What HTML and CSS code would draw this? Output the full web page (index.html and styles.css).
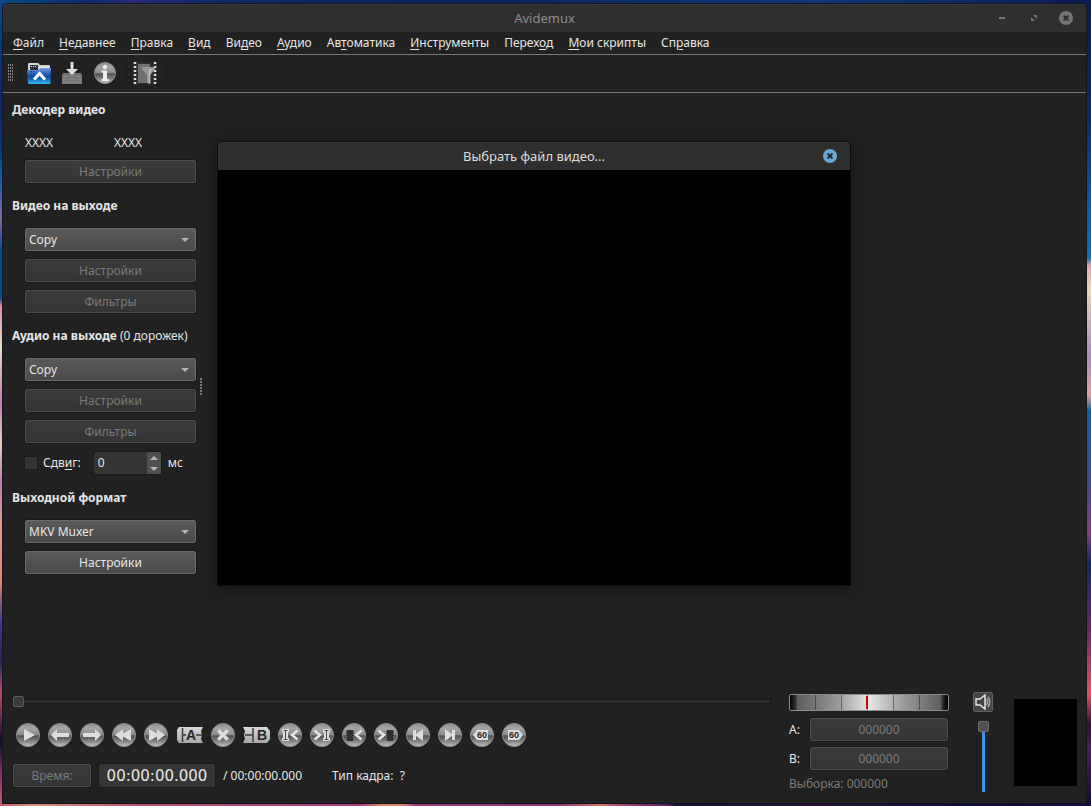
FILE: index.html
```html
<!DOCTYPE html>
<html lang="ru">
<head>
  <meta charset="UTF-8" />
  <title>Avidemux</title>
  <link rel="stylesheet" href="styles.css">
</head>
<body>
  <svg class="defs" width="0" height="0" aria-hidden="true">
    <defs>
      <linearGradient id="ball" x1="0" y1="0" x2="0" y2="1">
        <stop offset="0" stop-color="#8a8a8a" />
        <stop offset="0.2" stop-color="#a6a6a6" />
        <stop offset="0.48" stop-color="#8c8c8c" />
        <stop offset="0.54" stop-color="#505050" />
        <stop offset="0.78" stop-color="#858585" />
        <stop offset="1" stop-color="#c4c4c4" />
      </linearGradient>
      <linearGradient id="plate" x1="0" y1="0" x2="0" y2="1">
        <stop offset="0" stop-color="#d8d8d8" />
        <stop offset="1" stop-color="#a8a8a8" />
      </linearGradient>
      <linearGradient id="blue" x1="0" y1="0" x2="0" y2="1">
        <stop offset="0" stop-color="#6f9ddc" />
        <stop offset="0.45" stop-color="#1a53b0" />
        <stop offset="0.55" stop-color="#0c4aa8" />
        <stop offset="1" stop-color="#35b4f0" />
      </linearGradient>
    </defs>
    <symbol id="disc" viewBox="0 0 24 24">
      <circle cx="12" cy="12" r="11.5" fill="url(#ball)" stroke="#8e8e8e" />
    </symbol>
  </svg>

  <div class="window">
    <header class="titlebar">
      <span></span>
      <h1 class="title">Avidemux</h1>
      <div class="window-buttons">
        <button aria-label="Свернуть"><svg width="14" height="14"><path d="M4 6h6v2H4z" fill="#777" /></svg></button>
        <button aria-label="Развернуть"><svg width="14" height="14"><path d="M6 4h4v4zM4 6v4h4z" fill="#777" /></svg></button>
        <button aria-label="Закрыть"><svg width="14" height="14"><circle cx="7" cy="7" r="7" fill="#747578" /><path d="M4.5 4.5l5 5m0-5l-5 5" stroke="#2f2f2f" stroke-width="1.8" /></svg></button>
      </div>
    </header>

    <nav class="menu">
      <a href="#"><u>Ф</u>айл</a>
      <a href="#"><u>Н</u>едавнее</a>
      <a href="#"><u>П</u>равка</a>
      <a href="#"><u>В</u>ид</a>
      <a href="#">Ви<u>д</u>ео</a>
      <a href="#"><u>А</u>удио</a>
      <a href="#">Ав<u>т</u>оматика</a>
      <a href="#"><u>И</u>нструменты</a>
      <a href="#">Перех<u>о</u>д</a>
      <a href="#"><u>М</u>ои скрипты</a>
      <a href="#">Сп<u>р</u>авка</a>
    </nav>

    <div class="toolbar">
      <span class="grip"></span>
      <span class="separator"></span>
      <button aria-label="Открыть видео">
        <svg width="24" height="24" viewBox="0 0 24 24">
          <path d="M1 3q0-1 1-1h9l2 2h9q1 0 1 1v13H1z" fill="#d5d5d5" />
          <path d="M3 4h8v14H3z" fill="#2d3340" />
          <path d="M4 5h1v1H4zM6 5h1v1H6zM8 5h1v1H8z" fill="#ddd" />
          <path d="M13 6h9v2h-9z" fill="#eee" />
          <path d="M0 10q0-1 1-1h10l3-2h9q1 0 1 1l-.6 14q0 1-1 1H2q-1 0-1-1z" fill="url(#blue)" />
          <path d="M4 10v10M7 10v10" stroke="#15316b" stroke-dasharray="1 1" />
          <path d="M7 18.500l5.500-6 5.500 6" fill="none" stroke="#fff" stroke-width="3" />
        </svg>
      </button>
      <button aria-label="Сохранить видео">
        <svg width="24" height="24" viewBox="0 0 24 24">
          <path d="M3 12h18l1 3v7q0 1-1 1H3q-1 0-1-1v-7z" fill="#777" />
          <path d="M2 15.500h20M2 18.500h20M2 21.500h20" stroke="#828282" />
          <path d="M10.500 1h3v7H18l-6 6-6-6h4.500z" fill="#dedede" />
        </svg>
      </button>
      <button aria-label="Информация">
        <svg width="24" height="24" viewBox="0 0 24 24">
          <use href="#disc" x="1" y="1" width="22" height="22" />
          <circle cx="12" cy="6" r="2.200" fill="#eee" />
          <path d="M8.500 9.500H14V18h2v2H8.500v-2H10v-6.500H8.500z" fill="#eee" />
        </svg>
      </button>
      <span class="separator"></span>
      <button aria-label="Фильтры видео">
        <svg width="24" height="24" viewBox="0 0 24 24">
          <path d="M0 1h24v22H0z" fill="#2b2b2b" />
          <path d="M2 1v22M22 1v22" stroke="#ddd" stroke-width="2.500" stroke-dasharray="2 2" />
          <path d="M5 3h12v19H5z" fill="#707070" />
          <path d="M9 6h13v2l-4.500 6v9L14 22v-8L9 8z" fill="#999" />
          <path d="M16 8h3l-2 5v9h-1z" fill="#bbb" />
        </svg>
      </button>
      <span class="separator"></span>
    </div>

    <main class="workspace">
      <aside class="sidebar">
        <section>
          <h2>Декодер видео</h2>
          <div class="fields">
            <div class="codec"><span>XXXX</span><span>XXXX</span></div>
            <button class="btn" disabled>Настройки</button>
          </div>
        </section>
        <section>
          <h2><label for="videoCodec">Видео на выходе</label></h2>
          <div class="fields">
            <div class="combo"><select id="videoCodec"><option>Copy</option></select></div>
            <button class="btn" disabled>Настройки</button>
            <button class="btn" disabled>Фильтры</button>
          </div>
        </section>
        <section>
          <h2><label for="audioCodec">Аудио на выходе <span class="plain">(0 дорожек)</span></label></h2>
          <div class="fields">
            <div class="combo"><select id="audioCodec"><option>Copy</option></select></div>
            <button class="btn" disabled>Настройки</button>
            <button class="btn" disabled>Фильтры</button>
            <div class="shift">
              <input type="checkbox" id="shiftOn">
              <label for="shiftOn">Сдв<u>и</u>г:</label>
              <div class="spin">
                <input type="number" id="shiftValue" value="0" aria-label="Сдвиг, мс">
                <div class="spin-buttons">
                  <button aria-label="Больше"><svg width="8" height="4"><path d="M0 4l4-4 4 4z" fill="#b5b5b5" /></svg></button>
                  <button aria-label="Меньше"><svg width="8" height="4"><path d="M0 0l4 4 4-4z" fill="#b5b5b5" /></svg></button>
                </div>
              </div>
              <label for="shiftValue">мс</label>
            </div>
          </div>
        </section>
        <section>
          <h2><label for="muxer">Выходной формат</label></h2>
          <div class="fields">
            <div class="combo"><select id="muxer"><option>MKV Muxer</option></select></div>
            <button class="btn">Настройки</button>
          </div>
        </section>
      </aside>
      <span class="splitter"></span>
    </main>

    <footer class="controls">
      <div class="playback">
        <div class="timeline"><input type="range" min="0" max="100" value="0" aria-label="Позиция"></div>
        <div class="transport">
          <button aria-label="Воспроизвести"><svg viewBox="0 0 24 24"><use href="#disc" /><path d="M8 6v12l11-6z" /></svg></button>
          <button aria-label="Предыдущий кадр"><svg viewBox="0 0 24 24"><use href="#disc" /><path d="M3 12l6-6v4h12v4H9v4z" /></svg></button>
          <button aria-label="Следующий кадр"><svg viewBox="0 0 24 24"><use href="#disc" /><path d="M21 12l-6-6v4H3v4h12v4z" /></svg></button>
          <button aria-label="Предыдущий ключевой кадр"><svg viewBox="0 0 24 24"><use href="#disc" /><path d="M3 12l8-6v4.500L19 6v12l-8-4.500V18z" /></svg></button>
          <button aria-label="Следующий ключевой кадр"><svg viewBox="0 0 24 24"><use href="#disc" /><path d="M21 12l-8-6v4.500L5 6v12l8-4.500V18z" /></svg></button>
          <button class="marker" aria-label="Маркер A">
            <svg viewBox="0 0 27 24">
              <path d="M3 4h24l-2 4 1 4-1 4 2 4H3l-2-3V7z" fill="url(#plate)" />
              <path d="M6.500 5v14M6 12h4M20 12h6" fill="none" stroke="#3a3a3a" stroke-width="1.500" />
              <text x="15" y="17" class="mark">A</text>
            </svg>
          </button>
          <button aria-label="Сбросить маркеры"><svg viewBox="0 0 24 24"><use href="#disc" /><path d="M8.500 6l3.500 3.700L15.500 6 18 8.500 14.500 12l3.500 3.500-2.500 2.500-3.500-3.700L8.500 18 6 15.500 9.500 12 6 8.500z" /></svg></button>
          <button class="marker" aria-label="Маркер B">
            <svg viewBox="0 0 27 24">
              <path d="M0 4h24l3 4v8l-3 4H0l2-4-1-4 1-4z" fill="url(#plate)" />
              <path d="M10 5v14M2 12h8" fill="none" stroke="#3a3a3a" stroke-width="1.500" />
              <text x="19" y="17" class="mark">B</text>
            </svg>
          </button>
          <button aria-label="К маркеру A"><svg viewBox="0 0 24 24"><use href="#disc" /><path d="M4 6h7v3h-1v6h1v3H4v-3h1V9H4z" /><path d="M5.500 7.500h4m-4 9h4M7.500 7.500v9" class="ink" /><path d="M19.500 7.500L14 12l5.500 4.500" class="chev" /></svg></button>
          <button aria-label="К маркеру B"><svg viewBox="0 0 24 24"><use href="#disc" /><path d="M13 6h7v3h-1v6h1v3h-7v-3h1V9h-1z" /><path d="M14.500 7.500h4m-4 9h4M16.500 7.500v9" class="ink" /><path d="M4.500 7.500L10 12l-5.500 4.500" class="chev" /></svg></button>
          <button aria-label="Предыдущий чёрный кадр"><svg viewBox="0 0 24 24"><use href="#disc" /><path d="M4 7h8v11H4z" class="film" /><path d="M4.500 7v11M11.500 7v11" class="holes" /><path d="M19.500 7.500L14 12l5.500 4.500" class="chev" /></svg></button>
          <button aria-label="Следующий чёрный кадр"><svg viewBox="0 0 24 24"><use href="#disc" /><path d="M12 7h8v11h-8z" class="film" /><path d="M12.500 7v11M19.500 7v11" class="holes" /><path d="M4.500 7.500L10 12l-5.500 4.500" class="chev" /></svg></button>
          <button aria-label="В начало"><svg viewBox="0 0 24 24"><use href="#disc" /><path d="M7 7h3v4l7-5v12l-7-5v4H7z" /></svg></button>
          <button aria-label="В конец"><svg viewBox="0 0 24 24"><use href="#disc" /><path d="M17 7h-3v4L7 6v12l7-5v4h3z" /></svg></button>
          <button aria-label="Назад на 60 секунд"><svg viewBox="0 0 24 24"><use href="#disc" /><path d="M3 12l4-5h11v10H7z" /><text x="12" y="15" class="sec">60</text></svg></button>
          <button aria-label="Вперёд на 60 секунд"><svg viewBox="0 0 24 24"><use href="#disc" /><path d="M21 12l-4-5H6v10h11z" /><text x="12" y="15" class="sec">60</text></svg></button>
        </div>
        <div class="time">
          <button class="btn time-btn" disabled>Время:</button>
          <input class="lcd" type="text" value="00:00:00.000" aria-label="Текущее время">
          <span class="duration">/ 00:00:00.000</span>
          <span>Тип кадра:&nbsp; ?</span>
        </div>
      </div>

      <div class="selection">
        <input class="jog" type="range" min="0" max="100" value="49" aria-label="Прокрутка">
        <div class="mark-row"><span>A:</span><button class="btn" disabled>000000</button></div>
        <div class="mark-row"><span>B:</span><button class="btn" disabled>000000</button></div>
        <div class="range">Выборка: 000000</div>
      </div>

      <div class="volume">
        <button class="mute" aria-label="Звук">
          <svg width="18" height="18" viewBox="0 0 18 18" fill="none">
            <path d="M2 6h4l5-4v14l-5-4H2z" stroke="#e4e4e4" stroke-width="1.500" />
            <path d="M12.500 6q2 3 0 6M14 4q3.500 5 0 10" stroke="#a5a5a5" stroke-width="1.500" />
          </svg>
        </button>
        <input type="range" min="0" max="100" value="100" aria-label="Громкость">
      </div>

      <div class="meter"></div>
    </footer>

    <div class="dialog" role="dialog" aria-labelledby="dialogTitle">
      <div class="titlebar">
        <span></span>
        <h2 class="title" id="dialogTitle">Выбрать файл видео...</h2>
        <div class="window-buttons">
          <button aria-label="Закрыть"><svg width="14" height="14"><circle cx="7" cy="7" r="7" fill="#6caad2" /><path d="M4.500 4.500l5 5m0-5l-5 5" stroke="#1c2a35" stroke-width="1.800" /></svg></button>
        </div>
      </div>
    </div>
  </div>
</body>
</html>
```
FILE: styles.css
```css
* {
  box-sizing: border-box;
}
body {
  margin: 0;
  min-height: 100vh;
  display: flex;
  padding: 4px 5px 3px 3px;
  font-family: "Noto Sans", sans-serif;
  font-size: 12px;
  line-height: 18px;
  color: #e6e6e6;
  /* desktop seen round the window: top, bottom, left, right */
  background:
    linear-gradient(90deg, #0c4a86, #0b2c66 8%, #2a2a7a 12%, #0a2a60 20%, #08245a 45%, #0c3a72 75%, #0a1c4c) top / 100% 4px no-repeat,
    linear-gradient(90deg, #c8566a, #d8907c 3%, #c0566c 12%, #b04a78 20%, #a83c7c 33%, #e08868 35%, #d8806c 37%, #a03c80 38%, #8c3478 51%, #d87060 55%, #903870 58%, #5a2468 61%, #1c0c30 62%, #2a1040 75%, #0c0c3a 90%, #101048) bottom / 100% 3px no-repeat,
    linear-gradient(#0c4a86, #0a2c60 12%, #0a3870 18%, #0d5ea0 22%, #8a6a9c 27%, #0c4a88 31%, #0c4a88 37%, #e0909a 38%, #e8dcc0 43%, #c87ca8 50%, #e8d0b8 55%, #c078a8 60%, #e0a088 65%, #e08868 72%, #4a3a88 77%, #282858 82%, #c04a68 86%, #180c28 92%, #6c2860 95%, #d05a70) left / 3px 100% no-repeat,
    linear-gradient(#0a1c4c, #0a2c70 15%, #0c5aa0 25%, #1070b0 32%, #e8a8b0 33%, #e8d8b8 36%, #a88cc0 44%, #e0a0a0 49%, #1060a0 51%, #404890 60%, #844080 66%, #10286c 70%, #6a2868 78%, #e05460 86%, #301038 90%, #4a2060 93%, #100c38) right / 5px 100% no-repeat,
    #0a2450;
}
h1, h2 {
  margin: 0;
  font-size: 12px;
  line-height: 18px;
}
button, input, select {
  font: inherit;
  color: inherit;
  margin: 0;
}
button {
  padding: 0;
  border: none;
  background: none;
}
svg {
  display: block;
}
u {
  text-underline-offset: 2px;
}
.defs {
  position: absolute;
}

.window {
  position: relative;
  flex: 1;
  display: flex;
  flex-direction: column;
  background: #212121;
  border-radius: 4px 4px 0 0;
  box-shadow: 0 0 0 1px #111722;
}
.titlebar {
  display: grid;
  grid-template-columns: 1fr auto 1fr;
  align-items: center;
  height: 28px;
  padding: 0 13px;
  background: #2f2f2f;
  border-radius: 4px 4px 0 0;
  box-shadow: inset 0 1px #383838;
}
.title {
  font-size: 13px;
  font-weight: normal;
  color: #8c8c8c;
}
.window-buttons {
  display: flex;
  justify-content: flex-end;
  gap: 18px;
}

.menu {
  display: flex;
  gap: 15px;
  height: 23px;
  padding: 2px 10px;
  border-bottom: 1px solid #7a7a7a;
}
.menu a {
  color: #e6e6e6;
  text-decoration: none;
}
.toolbar {
  display: flex;
  align-items: center;
  gap: 9px;
  height: 38px;
  padding: 0 5px 1px;
  border-bottom: 1px solid #7a7a7a;
}
.grip {
  width: 6px;
  height: 18px;
  margin-right: -3px;
  background: conic-gradient(from 270deg at 1px 2px, #858585 25%, transparent 0) 0 0 / 2px 3px;
}
.separator {
  width: 1px;
  height: 18px;
  background: #1a1a1a;
}
.separator + button {
  margin-left: -3px;
}

.workspace {
  flex: 1;
  display: flex;
  align-items: stretch;
}
.sidebar {
  display: flex;
  flex-direction: column;
  gap: 14px;
  width: 193px;
  padding: 8px 0 0 9px;
}
.sidebar h2 {
  margin-bottom: 13px;
  white-space: nowrap;
}
.plain {
  font-weight: normal;
}
.fields {
  display: flex;
  flex-direction: column;
  gap: 8px;
  padding-left: 13px;
}
.codec {
  display: grid;
  grid-template-columns: 89px 1fr;
  padding-top: 2px;
}
.btn,
.combo select {
  height: 23px;
  border: 1px solid #6b6b6b;
  border-radius: 2px;
  background: linear-gradient(#5a5a5a, #494949);
  box-shadow: 0 0 0 1px #1a1a1a;
  line-height: 18px;
}
.btn:disabled {
  color: #7b7b7b;
  border-color: #4e4e4e;
  background: linear-gradient(#3b3b3b, #343434);
}
.combo {
  position: relative;
  display: grid;
}
.combo select {
  appearance: none;
  padding: 0 3px;
}
.combo::after {
  content: "";
  position: absolute;
  right: 7px;
  top: 10px;
  border: 4px solid transparent;
  border-top-color: #b5b5b5;
  border-bottom: none;
}
.shift {
  display: flex;
  align-items: center;
  gap: 6px;
  height: 24px;
}
.shift input[type="checkbox"] {
  appearance: none;
  width: 12px;
  height: 12px;
  background: #343434;
  box-shadow: 0 0 0 1px #1a1a1a;
}
.spin {
  display: flex;
  width: 67px;
  height: 22px;
  margin: 0 1px 0 7px;
  border-radius: 2px;
  background: #353535;
  box-shadow: 0 0 0 1px #1a1a1a;
}
.spin input {
  appearance: textfield;
  flex: 1;
  min-width: 0;
  padding: 0 4px;
  border: none;
  background: none;
}
.spin-buttons {
  display: grid;
  width: 14px;
  border-radius: 0 2px 2px 0;
  background: #505050;
}
.spin-buttons button {
  display: grid;
  place-items: center;
}
.splitter {
  align-self: center;
  width: 2px;
  height: 17px;
  margin-left: 4px;
  background: repeating-linear-gradient(#7a7a7a 0 2px, transparent 2px 3px);
}

.controls {
  display: flex;
  padding: 10px 9px 10px 10px;
}
.playback {
  flex: 1;
}
.timeline {
  height: 23px;
  padding: 6px 0;
  background:
    repeating-linear-gradient(90deg, #161616 0 1px, transparent 1px 8px) 6px 0 / 100% 3px no-repeat,
    repeating-linear-gradient(90deg, #161616 0 1px, transparent 1px 8px) 6px 100% / 100% 3px no-repeat;
}
input[type="range"] {
  appearance: none;
  display: block;
  background: none;
}
.timeline input {
  width: 100%;
  height: 11px;
}
.timeline input::-webkit-slider-runnable-track {
  height: 3px;
  background: #303030;
  box-shadow: 0 0 0 1px #191919;
}
.timeline input::-webkit-slider-thumb {
  appearance: none;
  width: 11px;
  height: 11px;
  margin-top: -4px;
  border: 1px solid #5c5c5c;
  border-radius: 2px;
  background: #3a3a3a;
}
.transport {
  display: flex;
  gap: 8px;
  margin: 10px 3px 17px;
}
.transport button {
  width: 24px;
  height: 24px;
}
.transport .marker {
  width: 27px;
}
.transport svg {
  fill: #dedede;
}
.transport .ink {
  fill: none;
  stroke: #444;
}
.transport .chev {
  fill: none;
  stroke: #e4e4e4;
  stroke-width: 2.5;
}
.transport .film {
  fill: #303030;
}
.transport .holes {
  fill: none;
  stroke: #8a8a8a;
  stroke-dasharray: 1 1;
}
.mark,
.sec {
  fill: #262626;
  font-family: "Liberation Sans", sans-serif;
  font-weight: bold;
  font-size: 14px;
  text-anchor: middle;
}
.sec {
  font-size: 9px;
}
.time {
  display: flex;
  align-items: center;
  gap: 8px;
}
.time-btn {
  width: 78px;
}
.lcd {
  width: 116px;
  height: 23px;
  padding: 0;
  border: none;
  border-radius: 2px;
  background: #363636;
  box-shadow: 0 0 0 1px #1a1a1a;
  font-family: "DejaVu Sans", sans-serif;
  font-size: 15px;
  text-align: center;
}
.duration {
  margin-right: 22px;
}

.selection {
  width: 160px;
  margin: 4px 24px 0 19px;
}
.selection .jog {
  width: 100%;
  height: 17px;
  margin-bottom: 7px;
  padding: 1px;
  border: 1px solid #8c8c8c;
  border-radius: 2px;
  background:
    repeating-linear-gradient(90deg, transparent 0 25px, rgba(0, 0, 0, 0.4) 25px 26px),
    linear-gradient(90deg, #000, #333 6px, #5c5c5c 7px, #989898 30%, #e8e8e8 50%, #a0a0a0 70%, #5c5c5c 151px, #333 152px, #000);
}
.jog::-webkit-slider-thumb {
  appearance: none;
  width: 2px;
  height: 13px;
  background: #d40000;
}
.mark-row {
  display: flex;
  align-items: center;
  margin-bottom: 6px;
}
.mark-row span {
  width: 21px;
}
.mark-row .btn {
  width: 138px;
}
.range {
  color: #7b7b7b;
  margin-top: -1px;
}

.volume {
  display: flex;
  flex-direction: column;
  align-items: center;
  gap: 9px;
  width: 20px;
  margin-top: 2px;
}
.mute {
  width: 20px;
  height: 20px;
  border: 1px solid #606060;
  border-radius: 2px;
  background: #454545;
}
.volume input {
  writing-mode: vertical-lr;
  direction: rtl;
  width: 12px;
  height: 71px;
}
.volume input::-webkit-slider-runnable-track {
  width: 3px;
  background: #3f94ea;
}
.volume input::-webkit-slider-thumb {
  appearance: none;
  width: 11px;
  height: 11px;
  margin-left: -4px;
  border: 1px solid #6b6b6b;
  border-radius: 2px;
  background: #505050;
}
.meter {
  width: 63px;
  height: 87px;
  margin: 9px 0 0 21px;
  background: #000;
}

.dialog {
  position: absolute;
  left: 215px;
  top: 138px;
  width: 632px;
  height: 443px;
  background: #000;
  border-radius: 4px 4px 0 0;
  box-shadow: 0 0 0 1px #0c0c0c, 0 3px 14px rgba(0, 0, 0, 0.5);
}
.dialog .title {
  color: #dcdcdc;
}
```
